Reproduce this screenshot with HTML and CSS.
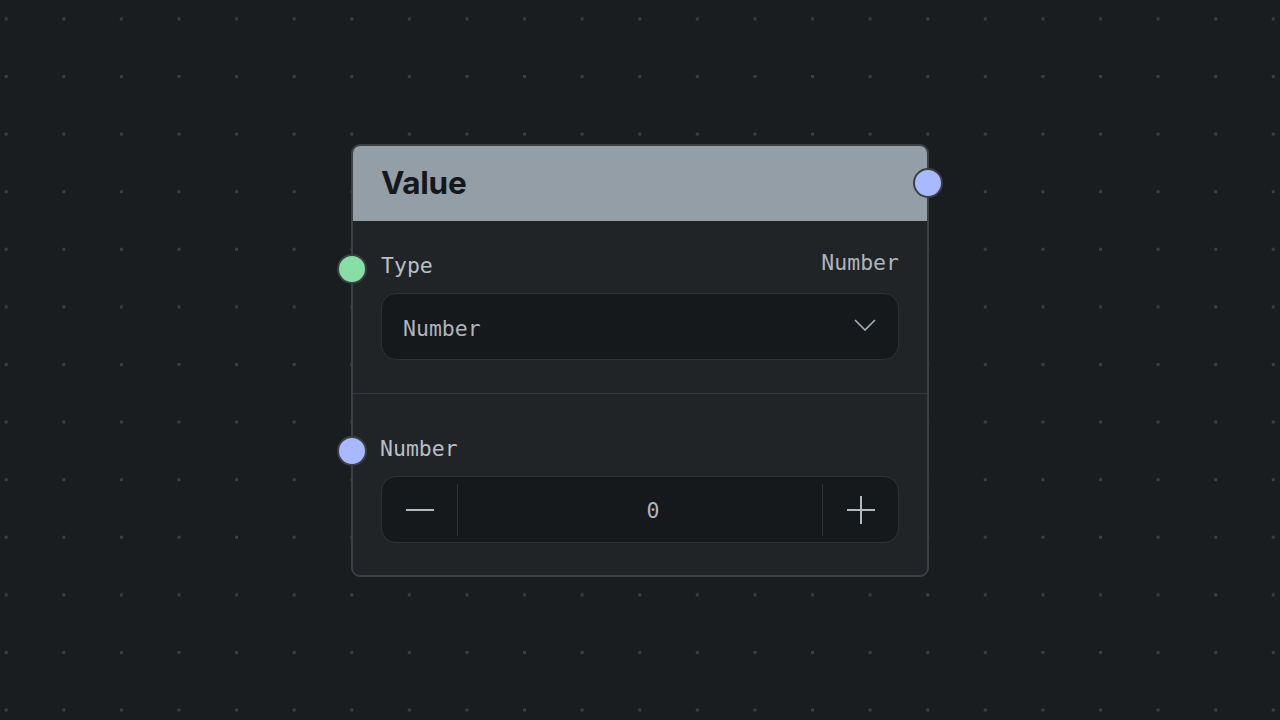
FILE: index.html
```html
<!DOCTYPE html>
<html lang="en">
<head>
    <meta charset="UTF-8">
    <meta name="viewport" content="width=device-width, initial-scale=1.0">
    <title>Value Node</title>
    <link rel="stylesheet" href="styles.css">
</head>
<body>
    <div class="canvas">
        <div class="node">
            <div class="node-header">
                <h1>Value</h1>
                <span class="handle handle-out"></span>
            </div>

            <div class="node-section section-type">
                <span class="handle handle-in handle-type"></span>
                <div class="field-row">
                    <span class="field-label">Type</span>
                    <span class="field-meta">Number</span>
                </div>
                <div class="select-box">
                    <span class="select-value">Number</span>
                    <svg class="chevron" width="22" height="12" viewBox="0 0 22 12">
                        <path d="M1 1 L11 11 L21 1" fill="none" stroke="#aab0b7" stroke-width="1.6"/>
                    </svg>
                </div>
            </div>

            <div class="node-section section-number">
                <span class="handle handle-in handle-number"></span>
                <div class="field-row">
                    <span class="field-label">Number</span>
                </div>
                <div class="number-box">
                    <button class="step-btn">
                        <svg width="30" height="30" viewBox="0 0 30 30">
                            <path d="M1 15 H29" stroke="#b4bac1" stroke-width="2"/>
                        </svg>
                    </button>
                    <span class="step-sep"></span>
                    <span class="number-value">0</span>
                    <span class="step-sep"></span>
                    <button class="step-btn">
                        <svg width="30" height="30" viewBox="0 0 30 30">
                            <path d="M1 15 H29 M15 1 V29" stroke="#b4bac1" stroke-width="2"/>
                        </svg>
                    </button>
                </div>
            </div>
        </div>
    </div>
</body>
</html>
```

FILE: styles.css
```css
* {
    margin: 0;
    padding: 0;
    box-sizing: border-box;
}

body {
    font-family: Inter, 'Liberation Sans', sans-serif;
    background-color: #1a1d20;
    width: 1280px;
    height: 720px;
    overflow: hidden;
}

.canvas {
    width: 1280px;
    height: 720px;
    background-image: radial-gradient(circle at 1.6px 1.6px, #3c3f44 1.4px, transparent 1.9px);
    background-size: 57.6px 57.6px;
    background-position: 4.7px 17.4px;
    padding: 144px 0 0 351px;
}

.node {
    position: relative;
    width: 578px;
    height: 433px;
    background-color: #212427;
    border: 2px solid #3c3f44;
    border-radius: 9px;
}

.node-header {
    position: relative;
    height: 75px;
    background-color: #949ea7;
    border-radius: 7px 7px 0 0;
    display: flex;
    align-items: center;
    padding-left: 28px;
}

.node-header h1 {
    font-size: 31.5px;
    font-weight: 700;
    color: #15181b;
    letter-spacing: -0.3px;
    margin-top: -2px;
}

.handle {
    position: absolute;
    width: 30px;
    height: 30px;
    border-radius: 50%;
    border: 2px solid #3c3f44;
}

.handle-out {
    right: -16px;
    top: 22px;
    background-color: #a7baff;
}

.handle-in {
    left: -16px;
}

.handle-type {
    top: 33px;
    background-color: #87dfa6;
}

.handle-number {
    top: 42px;
    background-color: #a7baff;
}

.node-section {
    position: relative;
    padding: 29px 28px 33px 28px;
}

.section-type {
    border-bottom: 1px solid #35383d;
}

.section-number {
    padding-top: 39px;
}

.field-row {
    display: flex;
    justify-content: space-between;
    align-items: center;
    height: 30px;
    margin-bottom: 13px;
    font-family: 'DejaVu Sans Mono', monospace;
    font-size: 21.5px;
}

.field-label {
    color: #b8bec5;
}

.section-number .field-label {
    margin-left: -1px;
}

.field-meta {
    color: #aeb4bb;
    margin-top: -6px;
}

.select-box {
    height: 67px;
    background-color: #16191c;
    border: 1px solid #2f3236;
    border-radius: 15px;
    display: flex;
    align-items: center;
    justify-content: space-between;
    padding: 0 22px 0 21px;
}

.select-value {
    font-family: 'DejaVu Sans Mono', monospace;
    font-size: 21.5px;
    color: #aeb4bb;
    margin-top: 4px;
}

.chevron {
    margin-top: -4px;
}

.number-box {
    height: 67px;
    background-color: #16191c;
    border: 1px solid #2f3236;
    border-radius: 15px;
    display: flex;
    align-items: center;
}

.step-btn {
    width: 75px;
    height: 100%;
    background: none;
    border: none;
    display: flex;
    align-items: center;
    justify-content: center;
    margin-top: 1px;
}

.step-sep {
    width: 1px;
    height: 52px;
    background-color: #2f3236;
}

.number-value {
    flex: 1;
    text-align: center;
    padding-left: 26px;
    font-family: 'DejaVu Sans Mono', monospace;
    font-size: 21.5px;
    color: #aeb4bb;
    margin-top: 2px;
}
```
